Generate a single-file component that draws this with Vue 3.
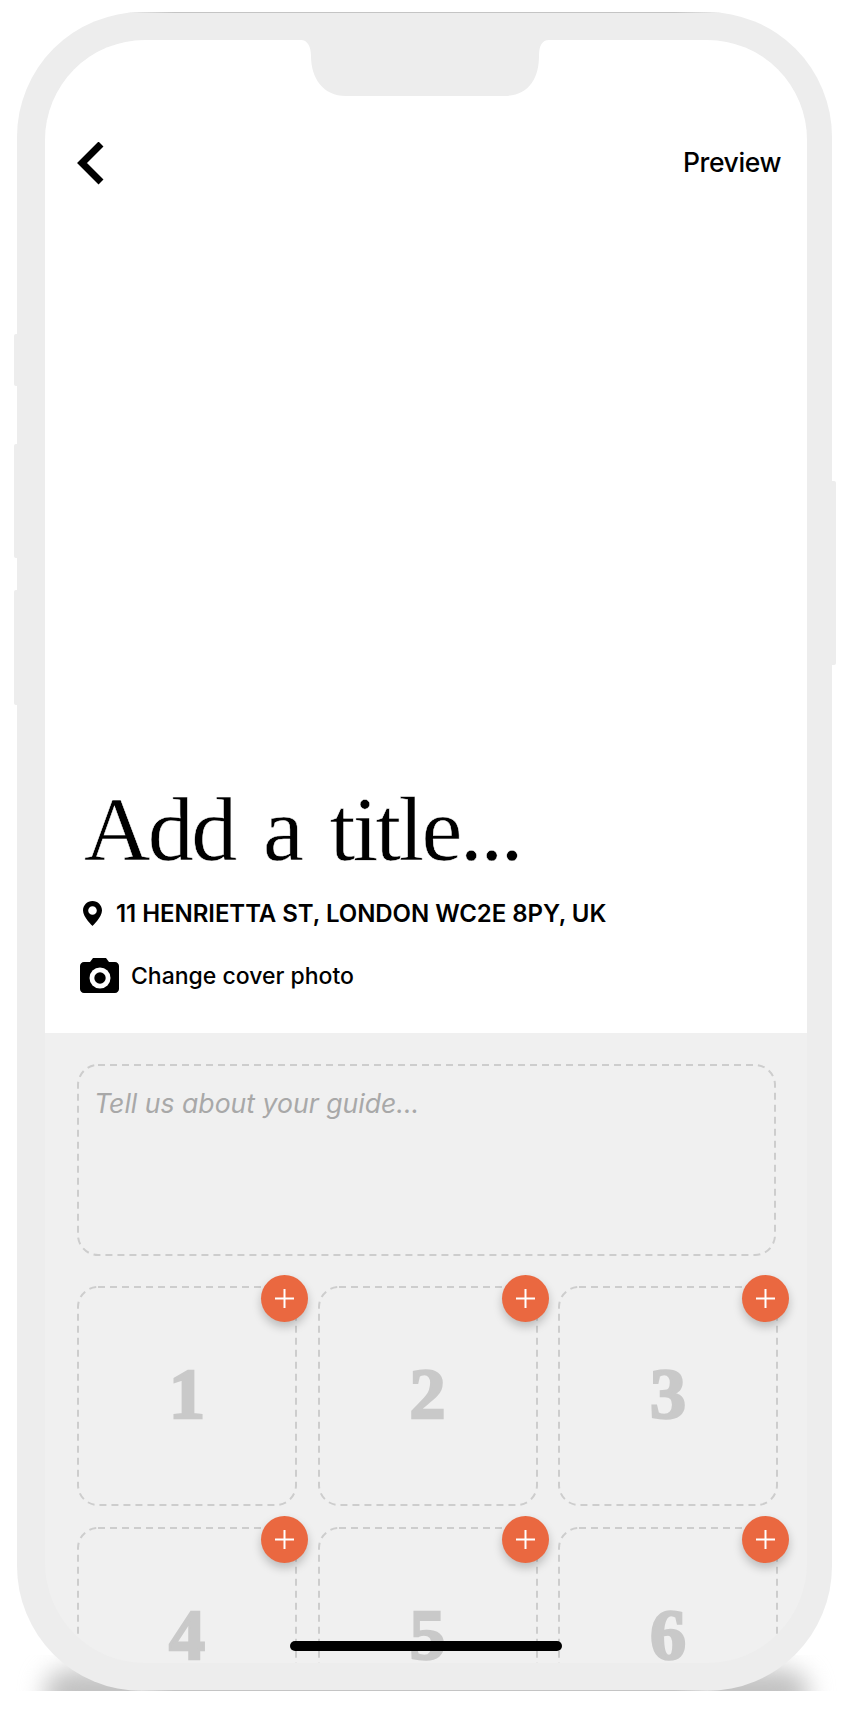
<template>
  <div class="page">
    <div class="ground-shadow"><div class="ground-blur"></div></div>

    <div class="phone">
      <span class="side-btn left one"></span>
      <span class="side-btn left two"></span>
      <span class="side-btn left three"></span>
      <span class="side-btn right"></span>

      <div class="screen">
        <svg class="notch" width="248" height="56" viewBox="0 0 248 56">
          <path d="M0 0H248C241 0 238 6 238 16C238 38 228 56 203 56H45C22 56 10 38 10 16C10 6 6 0 0 0Z" fill="#ededed" />
        </svg>

        <section class="cover">
          <header class="top-bar">
            <svg class="back" width="28" height="44" viewBox="0 0 28 44">
              <polyline points="24,2 5,21 24,40" fill="none" stroke="#000" stroke-width="7" />
            </svg>
            <span class="preview">Preview</span>
          </header>

          <h1 class="title">Add a title...</h1>

          <div class="address">
            <svg width="19" height="25" viewBox="0 0 19 25">
              <path fill-rule="evenodd" fill="#000" d="M9.5 0C4.2 0 0 4.2 0 9.5C0 16 9.5 25 9.5 25C9.5 25 19 16 19 9.5C19 4.2 14.8 0 9.5 0ZM9.5 5.2A4.3 4.3 0 1 1 9.5 13.8A4.3 4.3 0 1 1 9.5 5.2Z" />
            </svg>
            <span>11 HENRIETTA ST, LONDON WC2E 8PY, UK</span>
          </div>

          <div class="change-photo">
            <svg width="39" height="35" viewBox="0 0 39 35">
              <path fill="#000" d="M10 4L13 0H26L29 4H35C37.2 4 39 5.8 39 8V31C39 33.2 37.2 35 35 35H4C1.8 35 0 33.2 0 31V8C0 5.8 1.8 4 4 4Z" />
              <circle cx="20" cy="20" r="10.5" fill="#fff" />
              <circle cx="20" cy="20" r="5.7" fill="#000" />
            </svg>
            <span>Change cover photo</span>
          </div>
        </section>

        <section class="panel">
          <div class="about">
            <svg class="dash" width="699" height="192">
              <rect x="1" y="1" width="697" height="190" rx="20" />
            </svg>
            <span>Tell us about your guide...</span>
          </div>

          <div class="grid">
            <div v-for="n in slots" :key="n" class="slot">
              <svg class="dash" width="220" height="220">
                <rect x="1" y="1" width="218" height="218" rx="20" />
              </svg>
              <span class="num">{{ n }}</span>
              <button class="add">
                <svg width="19" height="19" viewBox="0 0 19 19">
                  <path d="M9.5 0V19M0 9.5H19" stroke="#fff" stroke-width="2" />
                </svg>
              </button>
            </div>
          </div>
        </section>

        <div class="home-bar"></div>
      </div>
    </div>
  </div>
</template>

<script setup>
const slots = [1, 2, 3, 4, 5, 6]
</script>

<style>
html,
body {
  margin: 0;
  background: #fff;
}
</style>

<style scoped>
.page {
  position: relative;
  width: 843px;
  height: 1715px;
  padding: 12px 11px 0 17px;
  box-sizing: border-box;
  overflow: hidden;
  font-family: Inter, "Liberation Sans", sans-serif;
  color: #000;
}

.ground-shadow {
  position: absolute;
  left: 14px;
  top: 1655px;
  width: 825px;
  height: 36px;
  overflow: hidden;
}

.ground-blur {
  position: absolute;
  left: 30px;
  right: 30px;
  top: 14px;
  height: 50px;
  border-radius: 30px;
  background: #c2c2c2;
  filter: blur(12px);
}

.phone {
  position: relative;
  height: 1679px;
  padding: 28px 25px 28px 28px;
  box-sizing: border-box;
  background: #ededed;
  border-radius: 125px;
}

.phone::before,
.phone::after {
  content: "";
  position: absolute;
  left: 110px;
  right: 110px;
  height: 1px;
  background: linear-gradient(90deg, transparent, #c4c4c4 8%, #c4c4c4 92%, transparent);
}

.phone::before {
  top: 0;
}

.phone::after {
  bottom: 0;
}

.side-btn {
  position: absolute;
  width: 4px;
  background: #ededed;
}

.side-btn.left {
  left: -3px;
  border-radius: 2px 0 0 2px;
}

.side-btn.one {
  top: 322px;
  height: 52px;
}

.side-btn.two {
  top: 432px;
  height: 114px;
}

.side-btn.three {
  top: 578px;
  height: 115px;
}

.side-btn.right {
  right: -4px;
  top: 469px;
  height: 184px;
  border-radius: 0 2px 2px 0;
}

.screen {
  position: relative;
  height: 1623px;
  overflow: hidden;
  border-radius: 100px;
  background: #f0f0f0;
}

.notch {
  position: absolute;
  left: 256px;
  top: 0;
}

.cover {
  height: 993px;
  box-sizing: border-box;
  padding: 103px 26px 0 32px;
  background: #fff;
  display: flex;
  flex-direction: column;
}

.top-bar {
  display: flex;
  justify-content: space-between;
  align-items: center;
  height: 42px;
}

.preview {
  margin-bottom: 4px;
  font-size: 26.5px;
  font-weight: 550;
  letter-spacing: -0.4px;
}

.title {
  margin: 598px 0 0 7px;
  font-family: "Liberation Serif", serif;
  font-size: 92px;
  line-height: 92px;
  font-weight: 400;
  letter-spacing: -2.6px;
  word-spacing: 8px;
  white-space: nowrap;
  -webkit-text-stroke: 0.5px #fff;
}

.address {
  display: flex;
  align-items: center;
  gap: 14px;
  margin: 24px 0 0 6px;
  font-size: 24px;
  font-weight: 600;
  letter-spacing: -0.05px;
  white-space: nowrap;
}

.change-photo {
  display: flex;
  align-items: center;
  gap: 12px;
  margin: 30px 0 0 3px;
  font-size: 23px;
  font-weight: 500;
}

.panel {
  padding: 31px 29px 0 32px;
}

.about {
  position: relative;
  width: 699px;
  height: 192px;
  box-sizing: border-box;
  padding: 23px 17px;
  font-size: 26.6px;
  font-style: italic;
  color: #a8a8a8;
}

.dash {
  position: absolute;
  left: 0;
  top: 0;
}

.dash rect {
  fill: none;
  stroke: #cdcdcd;
  stroke-width: 2;
  stroke-dasharray: 7 5;
}

.grid {
  display: grid;
  grid-template-columns: repeat(3, 220px);
  column-gap: 20.5px;
  row-gap: 21px;
  margin-top: 30px;
}

.slot {
  position: relative;
  height: 220px;
  display: flex;
  align-items: center;
  justify-content: center;
}

.num {
  margin-bottom: 4px;
  font-family: "Liberation Serif", serif;
  font-size: 72px;
  line-height: 44px;
  font-weight: 700;
  color: #c9c9c9;
  -webkit-text-stroke: 2.5px #c9c9c9;
}

.add {
  position: absolute;
  right: -11px;
  top: -11px;
  width: 47px;
  height: 47px;
  padding: 0;
  border: none;
  border-radius: 50%;
  background: #ea6840;
  box-shadow: 0 5px 10px rgba(0, 0, 0, 0.22);
  display: flex;
  align-items: center;
  justify-content: center;
}

.home-bar {
  position: absolute;
  left: 245px;
  top: 1601px;
  width: 272px;
  height: 10px;
  border-radius: 5px;
  background: #000;
}
</style>
